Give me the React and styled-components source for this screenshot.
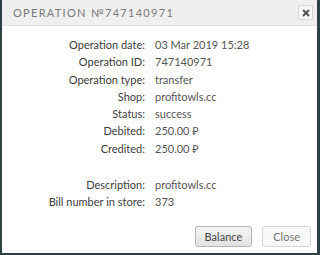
import React from 'react';
import styled, { createGlobalStyle } from 'styled-components';

const GlobalStyle = createGlobalStyle`
  html, body {
    margin: 0;
    padding: 0;
    background: #2e4246;
  }
  * {
    box-sizing: border-box;
  }
`;

const rows = [
  ['Operation date:', '03 Mar 2019 15:28'],
  ['Operation ID:', '747140971'],
  ['Operation type:', 'transfer'],
  ['Shop:', 'profitowls.cc'],
  ['Status:', 'success'],
  ['Debited:', '250.00 ₽'],
  ['Credited:', '250.00 ₽'],
];

const extra = [
  ['Description:', 'profitowls.cc'],
  ['Bill number in store:', '373'],
];

const App = () => {
  return (
    <>
      <GlobalStyle />
      <Screen>
        <Modal>
          <Header>
            <Title>Operation №747140971</Title>
            <CloseIcon aria-label="close">
              <svg width="8" height="8" viewBox="0 0 8 8">
                <path d="M1 1L7 7M7 1L1 7" stroke="#555" strokeWidth="2" />
              </svg>
            </CloseIcon>
          </Header>
          <Body>
            <Details>
              {rows.map(([label, value]) => (
                <React.Fragment key={label}>
                  <Label>{label}</Label>
                  <Value>{value}</Value>
                </React.Fragment>
              ))}
            </Details>
            <Details $gapTop>
              {extra.map(([label, value]) => (
                <React.Fragment key={label}>
                  <Label>{label}</Label>
                  <Value>{value}</Value>
                </React.Fragment>
              ))}
            </Details>
          </Body>
          <Footer>
            <Button>Balance</Button>
            <Button $muted>Close</Button>
          </Footer>
        </Modal>
      </Screen>
    </>
  );
};

const Screen = styled.div`
  width: 320px;
  height: 255px;
  padding: 0 3px 2px 2px;
  background: #2e4246;
  font-family: "Lato", "Noto Sans", sans-serif;
`;

const Modal = styled.div`
  height: 100%;
  background: #fff;
  display: flex;
  flex-direction: column;
`;

const Header = styled.div`
  height: 26px;
  background: #efefef;
  border-bottom: 1px solid #e4e4e4;
  display: flex;
  align-items: center;
  justify-content: space-between;
  padding: 0 4px 0 11px;
`;

const Title = styled.h3`
  margin: 0;
  font-size: 11px;
  font-weight: 400;
  letter-spacing: 1.3px;
  text-transform: uppercase;
  color: #7a7a7a;
`;

const CloseIcon = styled.button`
  width: 15px;
  height: 15px;
  padding: 0;
  border: 1px solid #d6d6d6;
  border-radius: 2px;
  background: #f6f6f6;
  display: flex;
  align-items: center;
  justify-content: center;
`;

const Body = styled.div`
  flex: 1;
  padding-top: 10px;
`;

const Details = styled.div`
  display: grid;
  grid-template-columns: 143px 1fr;
  column-gap: 10px;
  margin-top: ${(p) => (p.$gapTop ? '19px' : '0')};
`;

const Label = styled.div`
  text-align: right;
  font-size: 11px;
  line-height: 17.3px;
  color: #3c3c3c;
`;

const Value = styled.div`
  font-size: 11px;
  line-height: 17.3px;
  color: #555;
`;

const Footer = styled.div`
  display: flex;
  justify-content: flex-end;
  gap: 10px;
  padding: 0 6px 6px 0;
`;

const Button = styled.button`
  height: 21px;
  padding: 0 ${(p) => (p.$muted ? '10px' : '9px')};
  font-family: inherit;
  font-size: 11px;
  color: ${(p) => (p.$muted ? '#777' : '#444')};
  background: ${(p) => (p.$muted ? '#f7f7f7' : 'linear-gradient(#f4f4f4, #e2e2e2)')};
  border: 1px solid ${(p) => (p.$muted ? '#d8d8d8' : '#b5b5b5')};
  border-radius: 3px;
`;

export default App;
